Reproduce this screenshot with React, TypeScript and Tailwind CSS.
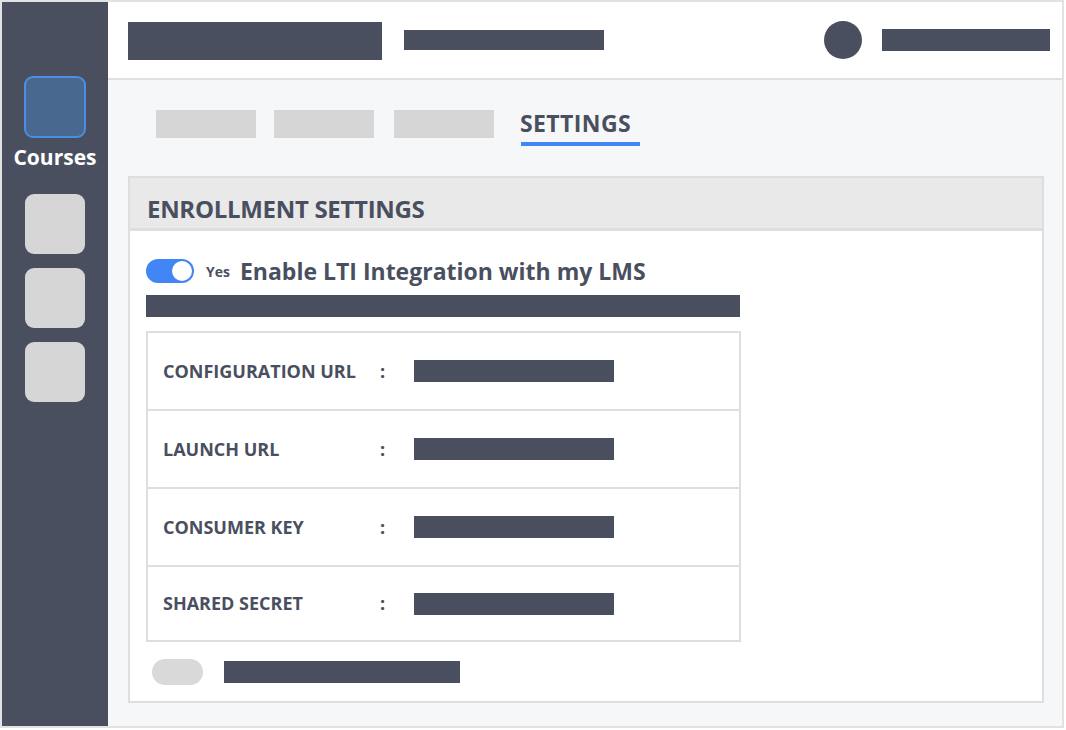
const fields = [
  { label: 'CONFIGURATION URL', h: 'h-[80px]' },
  { label: 'LAUNCH URL', h: 'h-[80px]' },
  { label: 'CONSUMER KEY', h: 'h-[80px]' },
  { label: 'SHARED SECRET', h: 'h-[77px]' },
];

const Sidebar = () => (
  <aside className="w-[106px] shrink-0 bg-[#4a4f5f] flex flex-col items-center pt-[74px]">
    <div className="w-[62px] h-[62px] rounded-[9px] bg-[#48688f] border-2 border-[#4a8fe3]" />
    <span className="mt-[5px] text-[21px] font-bold text-white leading-[28px]">Courses</span>
    <div className="mt-[23px] flex flex-col gap-[14px]">
      <div className="w-[60px] h-[60px] rounded-[9px] bg-[#d6d6d6]" />
      <div className="w-[60px] h-[60px] rounded-[9px] bg-[#d6d6d6]" />
      <div className="w-[60px] h-[60px] rounded-[9px] bg-[#d6d6d6]" />
    </div>
  </aside>
);

const Header = () => (
  <header className="h-[78px] shrink-0 bg-white border-b-2 border-[#e0e0e0] flex items-center pl-[20px] pr-[12px]">
    <div className="mt-[2px] w-[254px] h-[38px] bg-[#4a4f5f]" />
    <div className="ml-[22px] w-[200px] h-[20px] bg-[#4a4f5f]" />
    <div className="ml-auto w-[38px] h-[38px] rounded-full bg-[#4a4f5f]" />
    <div className="ml-[20px] w-[168px] h-[22px] bg-[#4a4f5f]" />
  </header>
);

const Tabs = () => (
  <div className="flex items-start pl-[48px] pt-[30px]">
    <div className="w-[100px] h-[28px] bg-[#d6d6d6]" />
    <div className="ml-[18px] w-[100px] h-[28px] bg-[#d6d6d6]" />
    <div className="ml-[20px] w-[100px] h-[28px] bg-[#d6d6d6]" />
    <div className="ml-[26px] flex flex-col">
      <span className="text-[23px] font-bold leading-[28px] -mt-[1px] text-[#4a4f5f] tracking-[0.4px]">SETTINGS</span>
      <div className="mt-[5px] ml-[1px] w-[119px] h-[4px] bg-[#4285f4]" />
    </div>
  </div>
);

const FieldRow = ({ label, h }: { label: string; h: string }) => (
  <div className={`${h} border-2 border-[#dedede] -mt-[2px] first:mt-0 flex items-center pl-[15px] bg-white`}>
    <span className="w-[217px] text-[18px] font-bold text-[#4a4f5f]">{label}</span>
    <span className="text-[18px] font-bold text-[#4a4f5f]">:</span>
    <div className="ml-[29px] w-[200px] h-[22px] bg-[#4a4f5f]" />
  </div>
);

const Panel = () => (
  <section className="ml-[20px] mt-[30px] w-[916px] border-2 border-[#dedede] bg-white">
    <div className="h-[53px] bg-[#e9e9e9] border-b-[3px] border-[#dedede] flex items-center pl-[17px] pt-[11px]">
      <span className="text-[24px] font-bold text-[#4a4f5f] tracking-[-0.3px]">ENROLLMENT SETTINGS</span>
    </div>
    <div className="pl-[16px] pt-[28px] pb-[16px]">
      <div className="flex items-center">
        <div className="w-[48px] h-[24px] rounded-full bg-[#4285f4] flex items-center justify-end pr-[2px]">
          <div className="w-[20px] h-[20px] rounded-full bg-white" />
        </div>
        <span className="ml-[12px] text-[14px] font-bold text-[#4a4f5f]">Yes</span>
        <span className="ml-[10px] text-[23px] font-bold text-[#4a4f5f] leading-[24px]">Enable LTI Integration with my LMS</span>
      </div>
      <div className="mt-[12px] w-[594px] h-[22px] bg-[#4a4f5f]" />
      <div className="mt-[14px] w-[595px] flex flex-col">
        {fields.map((f) => (
          <FieldRow key={f.label} label={f.label} h={f.h} />
        ))}
      </div>
      <div className="mt-[17px] flex items-center pl-[6px]">
        <div className="w-[51px] h-[26px] rounded-full bg-[#d9d9d9]" />
        <div className="ml-[21px] w-[236px] h-[22px] bg-[#4a4f5f]" />
      </div>
    </div>
  </section>
);

export default function App() {
  return (
    <div className="w-[1066px] h-[730px] bg-white" style={{ fontFamily: '"Open Sans", "Noto Sans", sans-serif' }}>
      <div className="w-[1064px] h-[728px] border-2 border-[#e2e2e2] flex overflow-hidden">
        <Sidebar />
        <main className="flex-1 flex flex-col bg-[#f6f7f9]">
          <Header />
          <Tabs />
          <Panel />
        </main>
      </div>
    </div>
  );
}
